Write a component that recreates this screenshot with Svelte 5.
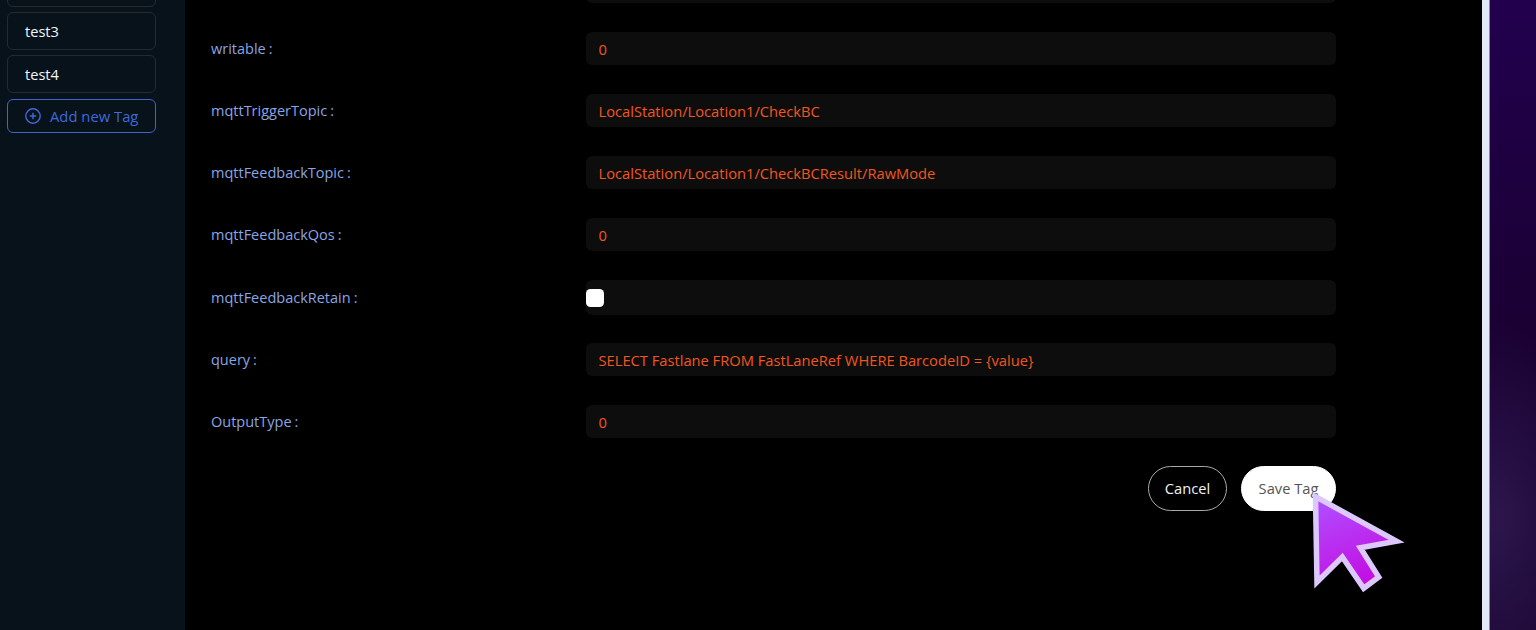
<script>
  const rows = [
    { label: 'writable', value: '0' },
    { label: 'mqttTriggerTopic', value: 'LocalStation/Location1/CheckBC' },
    { label: 'mqttFeedbackTopic', value: 'LocalStation/Location1/CheckBCResult/RawMode' },
    { label: 'mqttFeedbackQos', value: '0' },
    { label: 'mqttFeedbackRetain', check: true },
    { label: 'query', value: 'SELECT Fastlane FROM FastLaneRef WHERE BarcodeID = {value}' },
    { label: 'OutputType', value: '0' }
  ];
</script>

<div class="page">
  <aside class="sidebar">
    <div class="tag cut"></div>
    <div class="tag">test3</div>
    <div class="tag">test4</div>
    <button class="add">
      <svg class="plus" width="16" height="16" viewBox="0 0 16 16" fill="none" stroke="currentColor" stroke-width="1.4">
        <circle cx="8" cy="8" r="7.2" />
        <path d="M8 4.8v6.4M4.8 8h6.4" />
      </svg>
      Add new Tag
    </button>
  </aside>

  <main class="main">
    <div class="form">
      <div class="row top"><span class="label"></span><div class="field"></div></div>
      {#each rows as r}
        <div class="row" class:tall={r.check}>
          <span class="label">{r.label}<span class="colon">:</span></span>
          <div class="field">
            {#if r.check}<span class="checkbox"></span>{:else}{r.value}{/if}
          </div>
        </div>
      {/each}
      <div class="actions">
        <button class="btn cancel">Cancel</button>
        <button class="btn save">Save Tag</button>
      </div>
    </div>
  </main>

  <div class="strip"></div>
  <div class="purple"></div>

  <svg class="cursor" width="110" height="110" viewBox="0 0 110 110">
    <defs>
      <linearGradient id="cg" x1="0.2" y1="0" x2="0.6" y2="1">
        <stop offset="0" stop-color="#b04dff" />
        <stop offset="1" stop-color="#c40be0" />
      </linearGradient>
    </defs>
    <polygon points="5.5,6.7 86.5,51.1 50.3,57.7 68.7,87 53.7,98.3 32.3,67 7,92" fill="url(#cg)" stroke="#dcc8ff" stroke-width="5.5" stroke-miterlimit="10" />
  </svg>
</div>

<style>
  :global(body) { margin: 0; background: #000; }
  .page {
    display: flex;
    width: 1536px;
    height: 630px;
    overflow: hidden;
    position: relative;
    font-family: "Open Sans", "Noto Sans", sans-serif;
    font-size: 14.7px;
  }
  .sidebar {
    width: 185px;
    flex: none;
    background: #08121a;
    box-sizing: border-box;
    padding: 0 29px 0 7px;
    display: flex;
    flex-direction: column;
    gap: 5px;
    margin-top: -31px;
  }
  .tag {
    height: 38px;
    line-height: 36px;
    border: 1px solid #242b30;
    border-radius: 6px;
    padding: 0 17px;
    color: #f2f6fa;
    box-sizing: border-box;
    flex: none;
    font-size: 14.6px;
  }
  .add {
    height: 34px;
    flex: none;
    margin-top: 1px;
    border: 1px solid #4164cc;
    border-radius: 6px;
    background: transparent;
    color: #3f69d8;
    font: inherit;
    font-size: 14.8px;
    padding: 0 17px;
    display: flex;
    align-items: center;
    gap: 9px;
    white-space: nowrap;
  }
  .plus { flex: none; }
  .main {
    width: 1297px;
    flex: none;
    background: #000;
    box-sizing: border-box;
    padding-left: 26px;
  }
  .form { width: 1125px; margin-top: -30px; }
  .row {
    display: flex;
    height: 33px;
    margin-bottom: 29px;
    align-items: center;
  }
  .row.tall { height: 35px; margin-bottom: 28px; }
  .label {
    width: 375px;
    flex: none;
    color: #8aa5e4;
    white-space: nowrap;
    font-size: 14.5px;
  }
  .colon { margin-left: 3px; }
  .field {
    flex: 1;
    height: 100%;
    background: #0d0d0d;
    border-radius: 6px;
    color: #f2561f;
    padding-left: 12.5px;
    display: flex;
    align-items: center;
  }
  .row.tall .field { padding-left: 0; }
  .checkbox {
    width: 18px;
    height: 18px;
    background: #fff;
    border-radius: 4.5px;
  }
  .actions {
    display: flex;
    justify-content: flex-end;
    gap: 14px;
    margin-top: -1px;
  }
  .btn {
    height: 45px;
    border-radius: 23px;
    font: inherit;
    padding: 0 0 2px;
  }
  .cancel {
    width: 79px;
    background: #000;
    border: 1px solid #aaa;
    color: #f2f2f2;
  }
  .save {
    width: 95px;
    background: #fff;
    border: 1px solid #fff;
    color: #555;
  }
  .strip {
    width: 8px;
    box-sizing: border-box;
    flex: none;
    background: #e3e8f6;
    border-right: 1px solid #8a84a8;
  }
  .purple {
    flex: 1;
    background:
      radial-gradient(ellipse 90px 200px at 10px 520px, rgba(70,50,110,0.4), transparent),
      linear-gradient(180deg, #22004f 0%, #1a0033 50%, #1a0533 100%);
  }
  .cursor {
    position: absolute;
    left: 1310px;
    top: 490px;
  }
</style>
